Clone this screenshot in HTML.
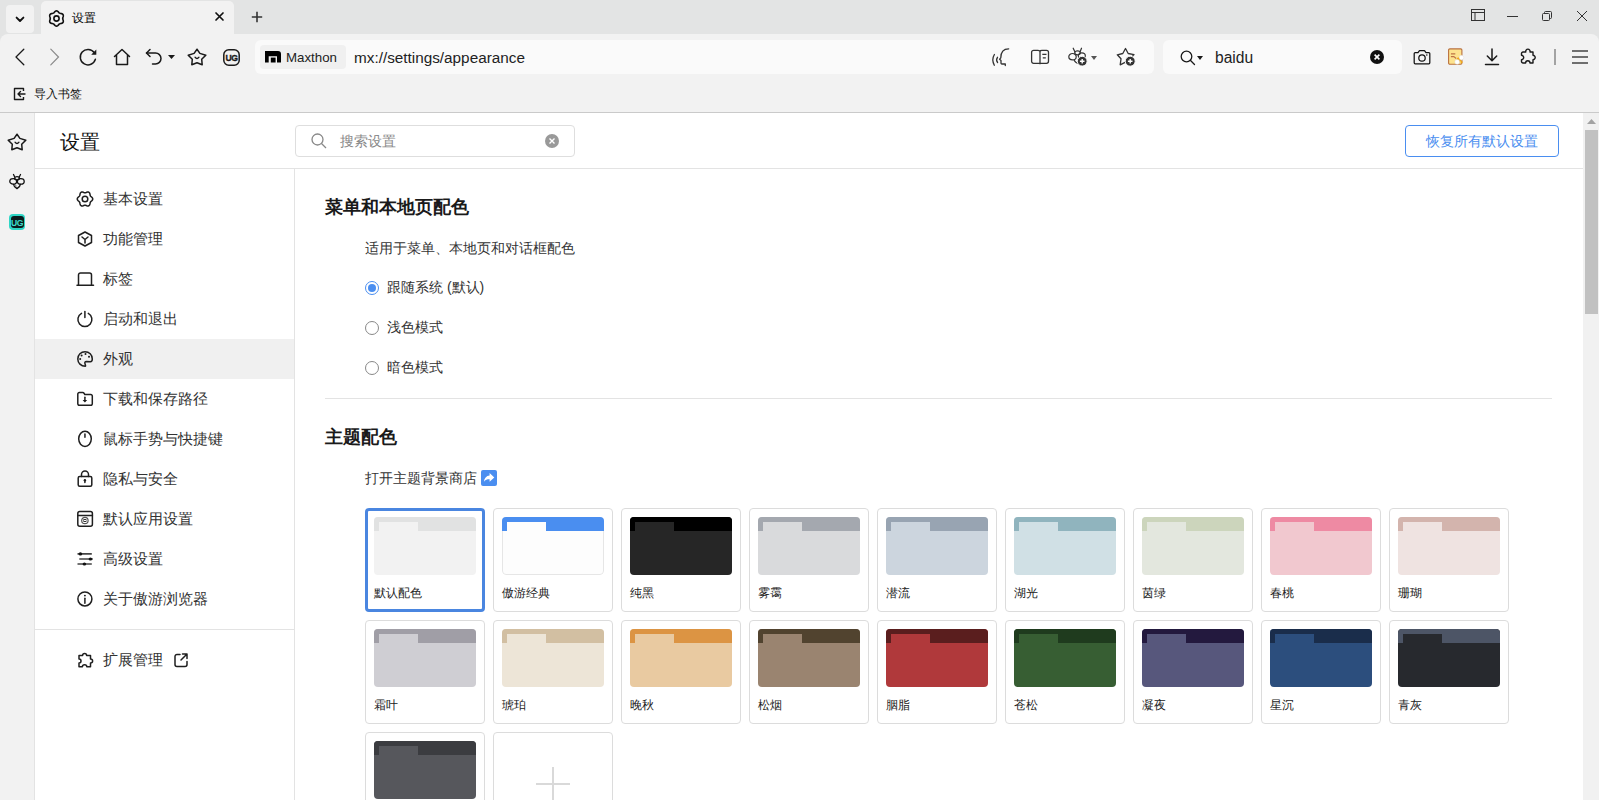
<!DOCTYPE html>
<html><head><meta charset="utf-8"><style>
*{box-sizing:border-box;margin:0;padding:0}
html,body{width:1599px;height:800px;overflow:hidden}
body{position:relative;background:#e3e4e4;font-family:"Liberation Sans",sans-serif;color:#222}
.a{position:absolute;white-space:nowrap}
svg{position:absolute;overflow:visible}
.ic{fill:none;stroke:#1f1f1f;stroke-width:1.5;stroke-linecap:round;stroke-linejoin:round}
.it{position:absolute;left:35px;width:259px;height:40px}
.it .t{position:absolute;left:68px;top:10px;font-size:15px;color:#333;line-height:20px;white-space:nowrap}
.it svg{left:42px;top:12px}
.card{position:absolute;width:120px;height:104px;border:1px solid #dcdcdc;border-radius:4px;background:#fff}
.card.sel{border:3px solid #4a86e0}
.pv{position:absolute;left:8px;top:8px;width:102px;height:58px;border-radius:4px;overflow:hidden}
.sel .pv{left:6px;top:6px}
.pv .bar{position:absolute;left:0;top:0;width:102px;height:14px}
.pv .tab{position:absolute;left:5px;top:5px;width:39px;height:9px}
.card .lb{position:absolute;left:8px;top:76px;font-size:12px;line-height:16px;color:#222}
.sel .lb{left:6px;top:74px}
.radio{position:absolute;left:365px;width:14px;height:14px;border:1px solid #888;border-radius:50%}
.rl{position:absolute;left:387px;font-size:14px;line-height:18px;color:#333;white-space:nowrap}
</style></head><body>
<div class="a" style="left:6px;top:5px;width:28px;height:28px;background:#f2f2f2;border-radius:4px"></div>
<svg style="left:15px;top:15.5px" width="10" height="7" viewBox="0 0 10 7"><path d="M1.6 1.6L5 5L8.4 1.6" fill="none" stroke="#111" stroke-width="1.9" stroke-linecap="round" stroke-linejoin="round"/></svg>
<div class="a" style="left:41px;top:1px;width:193px;height:34px;background:#f2f2f2;border-radius:5px 5px 0 0"></div>
<svg style="left:47.5px;top:10px" width="17" height="17" viewBox="0 0 17 17"><g transform="translate(0.5 0.5)"><path d="M14.20 8.00 L14.27 8.55 L14.45 9.14 L14.66 9.79 L14.81 10.48 L14.80 11.17 L14.58 11.80 L14.15 12.31 L13.55 12.66 L12.88 12.88 L12.21 13.02 L11.61 13.16 L11.10 13.37 L10.66 13.70 L10.24 14.15 L9.79 14.66 L9.26 15.14 L8.65 15.48 L8.00 15.60 L7.35 15.48 L6.74 15.14 L6.21 14.66 L5.76 14.15 L5.34 13.70 L4.90 13.37 L4.39 13.16 L3.79 13.02 L3.12 12.88 L2.45 12.66 L1.85 12.31 L1.42 11.80 L1.20 11.17 L1.19 10.48 L1.34 9.79 L1.55 9.14 L1.73 8.55 L1.80 8.00 L1.73 7.45 L1.55 6.86 L1.34 6.21 L1.19 5.52 L1.20 4.83 L1.42 4.20 L1.85 3.69 L2.45 3.34 L3.12 3.12 L3.79 2.98 L4.39 2.84 L4.90 2.63 L5.34 2.30 L5.76 1.85 L6.21 1.34 L6.74 0.86 L7.35 0.52 L8.00 0.40 L8.65 0.52 L9.26 0.86 L9.79 1.34 L10.24 1.85 L10.66 2.30 L11.10 2.63 L11.61 2.84 L12.21 2.98 L12.88 3.12 L13.55 3.34 L14.15 3.69 L14.58 4.20 L14.80 4.83 L14.81 5.52 L14.66 6.21 L14.45 6.86 L14.27 7.45Z" fill="none" stroke="#111" stroke-width="1.6"/><circle cx="8" cy="8" r="2.6" fill="none" stroke="#111" stroke-width="1.6"/></g></svg>
<div class="a" style="left:72px;top:10px;font-size:12px;line-height:16px;color:#000">设置</div>
<svg style="left:215px;top:12px" width="9" height="9" viewBox="0 0 9 9"><path d="M1 1L8 8M8 1L1 8" stroke="#111" stroke-width="1.7" stroke-linecap="round"/></svg>
<svg style="left:251px;top:11px" width="12" height="12" viewBox="0 0 12 12"><path d="M6 0.8V11.2M0.8 6H11.2" stroke="#333" stroke-width="1.6"/></svg>
<svg style="left:1471px;top:9px" width="14" height="12" viewBox="0 0 14 12"><rect x="0.5" y="0.5" width="13" height="11" fill="none" stroke="#333" stroke-width="1"/><path d="M0.5 3.5H13.5M4 3.5V11.5" stroke="#333" stroke-width="1"/></svg>
<svg style="left:1507px;top:16px" width="11" height="1" viewBox="0 0 11 1"><path d="M0 0.5H11" stroke="#333" stroke-width="1"/></svg>
<svg style="left:1542px;top:11px" width="10" height="10" viewBox="0 0 10 10"><rect x="0.5" y="2.5" width="7" height="7" rx="1" fill="none" stroke="#333"/><path d="M2.5 2.5V1.5A1 1 0 0 1 3.5 .5H8.5A1 1 0 0 1 9.5 1.5V6.5A1 1 0 0 1 8.5 7.5H7.5" fill="none" stroke="#333"/></svg>
<svg style="left:1577px;top:11px" width="10" height="10" viewBox="0 0 10 10"><path d="M0 0L10 10M10 0L0 10" stroke="#333" stroke-width="1"/></svg>
<div class="a" style="left:0;top:34px;width:1599px;height:79px;background:#f2f2f2;border-radius:8px 8px 0 0;border-bottom:1px solid #cacaca"></div>
<svg style="left:14px;top:48px" width="11" height="18" viewBox="0 0 11 18"><path d="M9.8 1.2L2 9L9.8 16.8" fill="none" stroke="#1a1a1a" stroke-width="1.3" stroke-linecap="round" stroke-linejoin="round"/></svg>
<svg style="left:49px;top:48px" width="11" height="18" viewBox="0 0 11 18"><path d="M1.8 1.2L9.5 9L1.8 16.8" fill="none" stroke="#8a8a8a" stroke-width="1.2" stroke-linecap="round"/></svg>
<svg style="left:79px;top:48px" width="19" height="18" viewBox="0 0 19 18"><path d="M16.4 11.3A7.7 7.7 0 1 1 15.2 4.6" fill="none" stroke="#1a1a1a" stroke-width="1.5" stroke-linecap="round"/><path d="M17.3 1.6V6.7H12.2Z" fill="#1a1a1a"/></svg>
<svg style="left:113px;top:48px" width="18" height="18" viewBox="0 0 18 18"><path d="M1.5 8.5L9 1.5L16.5 8.5M3.5 7V16.5H14.5V7" fill="none" stroke="#1a1a1a" stroke-width="1.5" stroke-linecap="round" stroke-linejoin="round"/></svg>
<svg style="left:145px;top:47.5px" width="18" height="18" viewBox="0 0 18 18"><path d="M5 1.5L1.5 5L5 8.5" fill="none" stroke="#1a1a1a" stroke-width="1.5" stroke-linecap="round" stroke-linejoin="round"/><path d="M1.5 5H10.5A5.5 5.5 0 0 1 10.5 16H7.5" fill="none" stroke="#1a1a1a" stroke-width="1.5" stroke-linecap="round" stroke-linejoin="round"/></svg>
<svg style="left:168px;top:55px" width="7" height="4" viewBox="0 0 7 4"><path d="M0 0H7L3.5 4Z" fill="#1a1a1a"/></svg>
<svg style="left:187px;top:47px" width="20" height="19" viewBox="0 0 20 19"><path d="M10 2.2L12.9 6.4L18.8 8.2L14.7 12.2L15.2 17.8L10 15.7L4.8 17.8L5.3 12.2L1.2 8.2L7.1 6.4Z" fill="none" stroke="#1a1a1a" stroke-width="1.5" stroke-linejoin="round"/><path d="M8 10.2Q10 12.8 12 10.2" fill="none" stroke="#1a1a1a" stroke-width="1.3" stroke-linecap="round"/></svg>
<svg style="left:223px;top:49px" width="17" height="17" viewBox="0 0 17 17"><rect x="0.8" y="0.8" width="15.4" height="15.4" rx="5" fill="none" stroke="#1a1a1a" stroke-width="1.5"/><text x="8.5" y="12.3" font-family="Liberation Sans" font-weight="bold" font-size="9.6" text-anchor="middle" fill="#1a1a1a" stroke="#1a1a1a" stroke-width="0.35" letter-spacing="-0.6" transform="translate(8.5 0) scale(0.9 1) translate(-8.5 0)">UG</text></svg>
<div class="a" style="left:255px;top:40px;width:899px;height:34px;background:#fafafa;border-radius:6px"></div>
<div class="a" style="left:260px;top:45px;width:86px;height:24px;background:#f0f0f0;border-radius:4px"></div>
<svg style="left:265px;top:51px" width="16" height="12" viewBox="0 0 16 12"><path d="M0 0H13Q16 0 16 3V11.5H12V5.2H3.7V11.5H0Z" fill="#000"/><rect x="5.8" y="6.6" width="4.8" height="4.9" fill="#000"/></svg>
<div class="a" style="left:286px;top:50px;font-size:13.3px;line-height:16px;color:#222">Maxthon</div>
<div class="a" style="left:354px;top:49px;font-size:15.3px;line-height:18px;color:#222">mx://settings/appearance</div>
<svg style="left:991px;top:47px" width="19" height="20" viewBox="0 0 19 20"><path d="M17.7 1.8C13 1.8 9.8 4 9.8 10.8L8.6 12.2L10 13.4V16.3Q10.2 17 11.3 17H14.3V18.5" fill="none" stroke="#333" stroke-width="1.3" stroke-linecap="round" stroke-linejoin="round"/><path d="M6.5 10.3Q4.6 13 6.6 15.5M3.4 7.5Q0.3 12.5 3.3 18.2" fill="none" stroke="#333" stroke-width="1.3" stroke-linecap="round"/></svg>
<svg style="left:1031px;top:49px" width="19" height="17" viewBox="0 0 19 17"><path d="M0.6 3.3A2 2 0 0 1 2.6 1.3H7Q9 1.3 9 2.6Q9 1.3 11 1.3H15.5A2 2 0 0 1 17.5 3.3V12.3A2 2 0 0 1 15.5 14.3H2.6A2 2 0 0 1 0.6 12.3Z" fill="none" stroke="#333" stroke-width="1.3" stroke-linejoin="round"/><path d="M9 2.6V15.3" stroke="#333" stroke-width="1.3"/><path d="M11.3 5.4H15.5M11.8 8.8H14.8" stroke="#333" stroke-width="1.3"/></svg>
<svg style="left:1068px;top:47px" width="20" height="20" viewBox="0 0 20 20"><path d="M5.2 1.2L7 5M13.5 1.2L12 5" stroke="#333" stroke-width="1.2" fill="none" stroke-linecap="round"/><ellipse cx="9.5" cy="5.8" rx="2.8" ry="2" fill="none" stroke="#333" stroke-width="1.2"/><ellipse cx="4.5" cy="9.7" rx="3.7" ry="3.2" fill="none" stroke="#333" stroke-width="1.2"/><ellipse cx="13.8" cy="8.8" rx="3.5" ry="3" fill="none" stroke="#333" stroke-width="1.2"/><path d="M6 13Q8 16.5 10.5 16.5" fill="none" stroke="#333" stroke-width="1.2"/><circle cx="14.2" cy="14.2" r="4.9" fill="#333" stroke="#fafafa" stroke-width="1"/><path d="M14.2 11.9V16.5M11.9 14.2H16.5" stroke="#fff" stroke-width="1.4"/></svg>
<svg style="left:1091px;top:56px" width="6" height="4" viewBox="0 0 6 4"><path d="M0 0H6L3 4Z" fill="#555"/></svg>
<svg style="left:1116px;top:47px" width="20" height="20" viewBox="0 0 20 20"><path d="M9.5 1.5L12.2 6.5L18 7.6L14 11.8L14.8 17.5L9.5 15.2L4.2 17.8L5 11.8L1.3 7.8L6.8 6.5Z" fill="none" stroke="#333" stroke-width="1.3" stroke-linejoin="round"/><circle cx="14.2" cy="14.2" r="5" fill="#333" stroke="#fafafa" stroke-width="1"/><path d="M14.2 11.9V16.5M11.9 14.2H16.5" stroke="#fff" stroke-width="1.4"/></svg>
<div class="a" style="left:1163px;top:40px;width:239px;height:34px;background:#fafafa;border-radius:6px"></div>
<svg style="left:1180px;top:50px" width="16" height="16" viewBox="0 0 16 16"><circle cx="6.5" cy="6.5" r="5.3" fill="none" stroke="#1a1a1a" stroke-width="1.3"/><path d="M10.3 10.3L14.5 14.5" stroke="#1a1a1a" stroke-width="1.3" stroke-linecap="round"/></svg>
<svg style="left:1197px;top:56px" width="6" height="4" viewBox="0 0 6 4"><path d="M0 0H6L3 4Z" fill="#1a1a1a"/></svg>
<div class="a" style="left:1215px;top:48.5px;font-size:15.6px;line-height:18px;color:#222">baidu</div>
<svg style="left:1370px;top:50px" width="14" height="14" viewBox="0 0 14 14"><circle cx="7" cy="7" r="7" fill="#111"/><path d="M4.6 4.6L9.4 9.4M9.4 4.6L4.6 9.4" stroke="#fff" stroke-width="1.6"/></svg>
<svg style="left:1413px;top:49px" width="18" height="16" viewBox="0 0 18 16"><path d="M1.2 4.5Q1.2 3.5 2.2 3.5H5L6.5 1.5H11.5L13 3.5H15.8Q16.8 3.5 16.8 4.5V13.8Q16.8 14.8 15.8 14.8H2.2Q1.2 14.8 1.2 13.8Z" fill="none" stroke="#111" stroke-width="1.25" stroke-linejoin="round"/><circle cx="9" cy="9" r="3.2" fill="none" stroke="#111" stroke-width="1.25"/><circle cx="13.8" cy="6" r=".8" fill="#1a1a1a"/></svg>
<svg style="left:1448px;top:48px" width="17" height="17" viewBox="0 0 17 17"><rect x="0.6" y="0.9" width="13.3" height="15.3" rx="1.2" fill="#fde38e" stroke="#b9703e" stroke-width="1.1"/><path d="M2.9 5.9H7.3M2.9 8.6H5.8L8.2 10.5" fill="none" stroke="#bd7444" stroke-width="1.1"/><path d="M9 10L12 8.8L13.5 12L10.5 15.5L8 14Z" fill="#f0a818"/><circle cx="13.5" cy="9.6" r="2.3" fill="#fff" stroke="#ddd" stroke-width=".5"/><circle cx="9.2" cy="13.9" r="2.4" fill="#fff" stroke="#ddd" stroke-width=".5"/><path d="M12.5 12.5L15 14L12.8 15.8Z" fill="#f0a818"/></svg>
<svg style="left:1484px;top:48px" width="16" height="18" viewBox="0 0 16 18"><path d="M8 1V12.5M3.3 8L8 12.7L12.7 8M1.5 16.5H14.5" fill="none" stroke="#1a1a1a" stroke-width="1.5" stroke-linecap="round" stroke-linejoin="round"/></svg>
<svg style="left:1520px;top:48px" width="18" height="18" viewBox="0 0 18 18"><path d="M3 4H5.8A2.2 2.2 0 1 1 10 4H13V7.3A2.2 2.2 0 1 1 13 11.7V15H10A2.2 2.2 0 1 0 5.6 15H3A1.5 1.5 0 0 1 1.5 13.5V11.7A2.2 2.2 0 1 0 1.5 7.3V5.5A1.5 1.5 0 0 1 3 4Z" fill="none" stroke="#1a1a1a" stroke-width="1.4" stroke-linejoin="round"/></svg>
<div class="a" style="left:1554px;top:49px;width:2px;height:16px;background:#a3a3a3"></div>
<svg style="left:1572px;top:50px" width="16" height="14" viewBox="0 0 16 14"><path d="M0 1H16M0 7H16M0 13H16" stroke="#444" stroke-width="1.4"/></svg>
<svg style="left:13px;top:87px" width="13" height="14" viewBox="0 0 13 14"><path d="M10.5 4V1.5H1.5V12.5H10.5V10" fill="none" stroke="#1a1a1a" stroke-width="1.4" stroke-linejoin="round"/><path d="M12 7H5M7.5 4.5L5 7L7.5 9.5" fill="none" stroke="#1a1a1a" stroke-width="1.4" stroke-linecap="round" stroke-linejoin="round"/></svg>
<div class="a" style="left:34px;top:86px;font-size:12px;line-height:16px;color:#111">导入书签</div>
<div class="a" style="left:0;top:113px;width:35px;height:687px;background:#f2f2f2;border-right:1px solid #e3e3e3"></div>
<svg style="left:7px;top:132px" width="20" height="19" viewBox="0 0 20 19"><path d="M10 2.2L12.9 6.4L18.8 8.2L14.7 12.2L15.2 17.8L10 15.7L4.8 17.8L5.3 12.2L1.2 8.2L7.1 6.4Z" fill="none" stroke="#1a1a1a" stroke-width="1.5" stroke-linejoin="round"/><path d="M8 10.2Q10 12.8 12 10.2" fill="none" stroke="#1a1a1a" stroke-width="1.3" stroke-linecap="round"/></svg>
<svg style="left:9px;top:173px" width="17" height="17" viewBox="0 0 17 17"><path d="M4.5 1.5Q5.2 2.8 5.7 4M11.5 1.5Q10.8 2.8 10.3 4" fill="none" stroke="#111" stroke-width="1.3" stroke-linecap="round"/><ellipse cx="8" cy="5.3" rx="2.4" ry="1.6" fill="none" stroke="#111" stroke-width="1.3"/><ellipse cx="4.2" cy="8.4" rx="3.4" ry="2.7" fill="none" stroke="#111" stroke-width="1.3"/><ellipse cx="11.8" cy="8.4" rx="3.4" ry="2.7" fill="none" stroke="#111" stroke-width="1.3"/><path d="M4.4 10.9Q4.6 13.3 8 15.6Q11.4 13.3 11.6 10.9" fill="none" stroke="#111" stroke-width="1.3" stroke-linejoin="round"/><path d="M5.6 12.2L7.6 13.3" stroke="#888" stroke-width="1.2"/></svg>
<div class="a" style="left:9px;top:214px;width:16px;height:16px;border-radius:4px;background:#2fd6c6"></div><div class="a" style="left:10.5px;top:215.5px;width:13px;height:12.5px;border-radius:3px;background:#0a1c1e"></div><svg style="left:9px;top:214px" width="16" height="16" viewBox="0 0 16 16"><text x="8" y="11.6" font-family="Liberation Sans" font-weight="bold" font-size="8.6" text-anchor="middle" fill="#3ddccc" letter-spacing="-0.4">UG</text></svg>
<div class="a" style="left:35px;top:113px;width:1548px;height:687px;background:#fff"></div>
<div class="a" style="left:35px;top:168px;width:1548px;height:1px;background:#e3e3e3"></div>
<div class="a" style="left:294px;top:169px;width:1px;height:631px;background:#e3e3e3"></div>
<div class="a" style="left:60px;top:131px;font-size:20px;line-height:22px;color:#111">设置</div>
<div class="a" style="left:295px;top:125px;width:280px;height:32px;border:1px solid #dedede;border-radius:4px;background:#fff"></div>
<div class="a" style="left:340px;top:132px;font-size:14px;line-height:18px;color:#888">搜索设置</div>
<svg style="left:311px;top:133px" width="16" height="16" viewBox="0 0 16 16"><circle cx="6.5" cy="6.5" r="5.5" fill="none" stroke="#888" stroke-width="1.3"/><path d="M10.5 10.5L15 15" stroke="#888" stroke-width="1.3"/></svg>
<svg style="left:545px;top:134px" width="14" height="14" viewBox="0 0 14 14"><circle cx="7" cy="7" r="7" fill="#999"/><path d="M4.5 4.5L9.5 9.5M9.5 4.5L4.5 9.5" stroke="#fff" stroke-width="1.4"/></svg>
<div class="a" style="left:1405px;top:125px;width:154px;height:32px;border:1px solid #4a8ef0;border-radius:4px;color:#4a8ef0;font-size:14px;line-height:30px;text-align:center">恢复所有默认设置</div>
<div class="a" style="left:1583px;top:113px;width:16px;height:687px;background:#f1f1f1"></div>
<svg style="left:1587px;top:119px" width="9" height="5" viewBox="0 0 9 5"><path d="M0 5L4.5 0L9 5Z" fill="#a3a3a3"/></svg>
<div class="a" style="left:1585px;top:130px;width:13px;height:184px;background:#c1c1c1"></div>
<div class="it" style="top:179px;"><svg width="16" height="16" viewBox="0 0 16 16"><path class="ic" d="M15.75 8.00 L15.62 8.67 L15.26 9.28 L14.76 9.81 L14.23 10.27 L13.76 10.68 L13.41 11.12 L13.20 11.64 L13.08 12.26 L12.95 12.95 L12.74 13.65 L12.39 14.27 L11.88 14.71 L11.23 14.93 L10.52 14.93 L9.81 14.76 L9.15 14.52 L8.55 14.33 L8.00 14.25 L7.45 14.33 L6.85 14.52 L6.19 14.76 L5.48 14.93 L4.77 14.93 L4.13 14.71 L3.61 14.27 L3.26 13.65 L3.05 12.95 L2.92 12.26 L2.80 11.64 L2.59 11.12 L2.24 10.68 L1.77 10.27 L1.24 9.81 L0.74 9.28 L0.38 8.67 L0.25 8.00 L0.38 7.33 L0.74 6.72 L1.24 6.19 L1.77 5.73 L2.24 5.32 L2.59 4.87 L2.80 4.36 L2.92 3.74 L3.05 3.05 L3.26 2.35 L3.61 1.73 L4.12 1.29 L4.77 1.07 L5.48 1.07 L6.19 1.24 L6.85 1.48 L7.45 1.67 L8.00 1.75 L8.55 1.67 L9.15 1.48 L9.81 1.24 L10.52 1.07 L11.23 1.07 L11.88 1.29 L12.39 1.73 L12.74 2.35 L12.95 3.05 L13.08 3.74 L13.20 4.36 L13.41 4.87 L13.76 5.32 L14.23 5.73 L14.76 6.19 L15.26 6.72 L15.62 7.33Z"/><circle class="ic" cx="8" cy="8" r="2.8"/></svg><div class="t">基本设置</div></div>
<div class="it" style="top:219px;"><svg width="16" height="16" viewBox="0 0 16 16"><path class="ic" d="M8 1L14.5 4.5V11.5L8 15L1.5 11.5V4.5Z"/><path class="ic" d="M5 6L8 8.5L11 6M8 8.5V12"/></svg><div class="t">功能管理</div></div>
<div class="it" style="top:259px;"><svg width="16" height="16" viewBox="0 0 16 16"><path class="ic" d="M1.5 14.3V4A2 2 0 0 1 3.5 2H12.5A2 2 0 0 1 14.5 4V14.3M0 14.3H16.5"/></svg><div class="t">标签</div></div>
<div class="it" style="top:299px;"><svg width="16" height="16" viewBox="0 0 16 16"><path class="ic" d="M7.9 0.6V6.5"/><path class="ic" d="M4.5 2.4A7 7 0 1 0 11.3 2.4"/></svg><div class="t">启动和退出</div></div>
<div class="it" style="top:339px;background:#f0f0f0;"><svg width="16" height="16" viewBox="0 0 16 16"><path class="ic" d="M8.3 15.3C4 15.3 0.8 12 0.8 8C0.8 3.8 4 0.8 8 0.8C12.2 0.8 15.3 3.8 15.3 8C15.3 9.7 14.7 10.7 13.3 10.7L9.5 10.5C8 10.5 7.5 11.5 8 12.8C8.5 14.3 8.8 15.3 8.3 15.3Z"/><circle cx="4.6" cy="4.4" r="1" fill="#1a1a1a"/><circle cx="8.5" cy="3" r="1" fill="#1a1a1a"/><circle cx="12" cy="5.8" r="1" fill="#1a1a1a"/><circle cx="3.2" cy="8" r="1" fill="#1a1a1a"/></svg><div class="t">外观</div></div>
<div class="it" style="top:379px;"><svg width="16" height="16" viewBox="0 0 16 16"><path class="ic" d="M0.8 3A1.5 1.5 0 0 1 2.3 1.5H5.8Q6.5 1.5 7 2.2L7.8 3.5H13.8A1.5 1.5 0 0 1 15.3 5V12.8A1.5 1.5 0 0 1 13.8 14.3H2.3A1.5 1.5 0 0 1 0.8 12.8Z"/><path class="ic" d="M7.9 6.3V9.5"/><path d="M5.6 9H10.2L7.9 11.6Z" fill="#1a1a1a"/></svg><div class="t">下载和保存路径</div></div>
<div class="it" style="top:419px;"><svg width="16" height="16" viewBox="0 0 16 16"><ellipse class="ic" cx="8" cy="7.8" rx="6.3" ry="7.6"/><path class="ic" d="M7.95 3V6.3"/></svg><div class="t">鼠标手势与快捷键</div></div>
<div class="it" style="top:459px;"><svg width="16" height="16" viewBox="0 0 16 16"><rect class="ic" x="1.2" y="5.5" width="13.6" height="9.8" rx="1.5"/><path class="ic" d="M4.5 5.5V3.5A3.5 3.5 0 0 1 11.5 3.5V5.5"/><circle cx="7.9" cy="9.2" r="1.2" fill="#1a1a1a"/><path class="ic" d="M7.9 9.5V11.6"/></svg><div class="t">隐私与安全</div></div>
<div class="it" style="top:499px;"><svg width="16" height="16" viewBox="0 0 16 16"><rect class="ic" x="0.8" y="0.5" width="14.6" height="14.8" rx="2"/><path class="ic" d="M0.8 4.4H15.4"/><circle class="ic" cx="7.9" cy="9.5" r="3.2" style="stroke-width:1.2;stroke:#555"/><rect x="6.9" y="8.5" width="2" height="2" fill="none" stroke="#333" stroke-width="1"/></svg><div class="t">默认应用设置</div></div>
<div class="it" style="top:539px;"><svg width="16" height="16" viewBox="0 0 16 16"><path d="M0.5 2.9H14.8M2.3 8H15.8M0.5 13H14.8" stroke="#444" stroke-width="1.7"/><ellipse cx="3.4" cy="2.9" rx="1.8" ry="1.6" fill="#111"/><ellipse cx="13.4" cy="8" rx="1.8" ry="1.6" fill="#111"/><ellipse cx="7.4" cy="13" rx="1.8" ry="1.6" fill="#111"/></svg><div class="t">高级设置</div></div>
<div class="it" style="top:579px;"><svg width="16" height="16" viewBox="0 0 16 16"><circle class="ic" cx="7.9" cy="7.9" r="7"/><path class="ic" d="M7.9 7.3V12.3"/><circle cx="7.9" cy="4.6" r="0.95" fill="#1a1a1a"/></svg><div class="t">关于傲游浏览器</div></div>
<div class="a" style="left:35px;top:629px;width:259px;height:1px;background:#e3e3e3"></div>
<div class="it" style="top:640px"><svg style="left:42px;top:12px" width="17" height="17" viewBox="0 0 17 17"><path class="ic" d="M2 3.5H5.6A2 2.1 0 1 1 9.6 3.5H13.5V7A2.1 2 0 1 1 13.5 11V14.8H9.8A2.2 2.1 0 1 0 5.4 14.8H2V11A2 2 0 1 0 2 7Z"/></svg><div class="t">扩展管理</div><svg style="left:139px;top:13px" width="14" height="14" viewBox="0 0 14 14"><path class="ic" d="M6 1.5H3A2 2 0 0 0 1 3.5V11.5A2 2 0 0 0 3 13.5H11A2 2 0 0 0 13 11.5V8.5M8.5 1H13V5.5M13 1L7 7"/></svg></div>
<div class="a" style="left:325px;top:196px;font-size:18px;font-weight:bold;line-height:22px;color:#1a1a1a">菜单和本地页配色</div>
<div class="a" style="left:365px;top:239px;font-size:14px;line-height:18px;color:#333">适用于菜单、本地页和对话框配色</div>
<div class="radio" style="top:281px;border-color:#4a8ef0"></div><div class="a" style="left:368px;top:284px;width:8px;height:8px;border-radius:50%;background:#4a8ef0"></div>
<div class="rl" style="top:278px">跟随系统 (默认)</div>
<div class="radio" style="top:321px"></div>
<div class="rl" style="top:318px">浅色模式</div>
<div class="radio" style="top:361px"></div>
<div class="rl" style="top:358px">暗色模式</div>
<div class="a" style="left:325px;top:398px;width:1227px;height:1px;background:#e3e3e3"></div>
<div class="a" style="left:325px;top:426px;font-size:18px;font-weight:bold;line-height:22px;color:#1a1a1a">主题配色</div>
<div class="a" style="left:365px;top:469px;font-size:14px;line-height:18px;color:#333">打开主题背景商店</div>
<div class="a" style="left:481px;top:470px;width:16px;height:16px;border-radius:2px;background:#4a8ef0"></div><svg style="left:481px;top:470px" width="16" height="16" viewBox="0 0 16 16"><path d="M13.3 7.6L8.6 3V5.4C5.3 5.7 3.3 8 2.9 11.8C4.3 9.8 6 9.2 8.6 9.2V11.8Z" fill="#fff"/></svg>
<div class="card sel" style="left:365px;top:508px"><div class="pv" style="background:#f2f2f2"><div class="bar" style="background:#e1e2e2"></div><div class="tab" style="background:#f2f2f2"></div></div><div class="lb">默认配色</div></div>
<div class="card" style="left:493px;top:508px"><div class="pv" style="background:#fdfdfd"><div class="a" style="left:0;top:0;width:102px;height:58px;border:1px solid #e6e6e6;border-radius:4px"></div><div class="bar" style="background:#4a8ef0"></div><div class="tab" style="background:#fdfdfd"></div></div><div class="lb">傲游经典</div></div>
<div class="card" style="left:621px;top:508px"><div class="pv" style="background:#262626"><div class="bar" style="background:#000000"></div><div class="tab" style="background:#262626"></div></div><div class="lb">纯黑</div></div>
<div class="card" style="left:749px;top:508px"><div class="pv" style="background:#d9dadc"><div class="bar" style="background:#a4a8af"></div><div class="tab" style="background:#d9dadc"></div></div><div class="lb">雾霭</div></div>
<div class="card" style="left:877px;top:508px"><div class="pv" style="background:#ccd5de"><div class="bar" style="background:#98a4b2"></div><div class="tab" style="background:#ccd5de"></div></div><div class="lb">潜流</div></div>
<div class="card" style="left:1005px;top:508px"><div class="pv" style="background:#d0e0e5"><div class="bar" style="background:#90b4be"></div><div class="tab" style="background:#d0e0e5"></div></div><div class="lb">湖光</div></div>
<div class="card" style="left:1133px;top:508px"><div class="pv" style="background:#e3e7de"><div class="bar" style="background:#ccd5bc"></div><div class="tab" style="background:#e3e7de"></div></div><div class="lb">茵绿</div></div>
<div class="card" style="left:1261px;top:508px"><div class="pv" style="background:#f1c8cf"><div class="bar" style="background:#ee8aa3"></div><div class="tab" style="background:#f1c8cf"></div></div><div class="lb">春桃</div></div>
<div class="card" style="left:1389px;top:508px"><div class="pv" style="background:#efe3e1"><div class="bar" style="background:#d3b4ad"></div><div class="tab" style="background:#efe3e1"></div></div><div class="lb">珊瑚</div></div>
<div class="card" style="left:365px;top:620px"><div class="pv" style="background:#cfced3"><div class="bar" style="background:#a09ea6"></div><div class="tab" style="background:#cfced3"></div></div><div class="lb">霜叶</div></div>
<div class="card" style="left:493px;top:620px"><div class="pv" style="background:#ede5d7"><div class="bar" style="background:#d2bfa2"></div><div class="tab" style="background:#ede5d7"></div></div><div class="lb">琥珀</div></div>
<div class="card" style="left:621px;top:620px"><div class="pv" style="background:#e9caa1"><div class="bar" style="background:#dc9443"></div><div class="tab" style="background:#e9caa1"></div></div><div class="lb">晚秋</div></div>
<div class="card" style="left:749px;top:620px"><div class="pv" style="background:#9a8470"><div class="bar" style="background:#51432f"></div><div class="tab" style="background:#9a8470"></div></div><div class="lb">松烟</div></div>
<div class="card" style="left:877px;top:620px"><div class="pv" style="background:#b0393b"><div class="bar" style="background:#5a1e1e"></div><div class="tab" style="background:#b0393b"></div></div><div class="lb">胭脂</div></div>
<div class="card" style="left:1005px;top:620px"><div class="pv" style="background:#375e33"><div class="bar" style="background:#1f3b1e"></div><div class="tab" style="background:#375e33"></div></div><div class="lb">苍松</div></div>
<div class="card" style="left:1133px;top:620px"><div class="pv" style="background:#57577c"><div class="bar" style="background:#23193e"></div><div class="tab" style="background:#57577c"></div></div><div class="lb">凝夜</div></div>
<div class="card" style="left:1261px;top:620px"><div class="pv" style="background:#2c4e7d"><div class="bar" style="background:#1a2d4b"></div><div class="tab" style="background:#2c4e7d"></div></div><div class="lb">星沉</div></div>
<div class="card" style="left:1389px;top:620px"><div class="pv" style="background:#27292e"><div class="bar" style="background:#4d5566"></div><div class="tab" style="background:#27292e"></div></div><div class="lb">青灰</div></div>
<div class="card" style="left:365px;top:732px"><div class="pv" style="background:#56575c"><div class="bar" style="background:#3b3c40"></div><div class="tab" style="background:#56575c"></div></div><div class="lb"></div></div>
<div class="card" style="left:493px;top:732px"><div class="a" style="left:42px;top:50px;width:34px;height:2px;background:#d9d9d9"></div><div class="a" style="left:58px;top:34px;width:2px;height:40px;background:#d9d9d9"></div></div>
</body></html>
